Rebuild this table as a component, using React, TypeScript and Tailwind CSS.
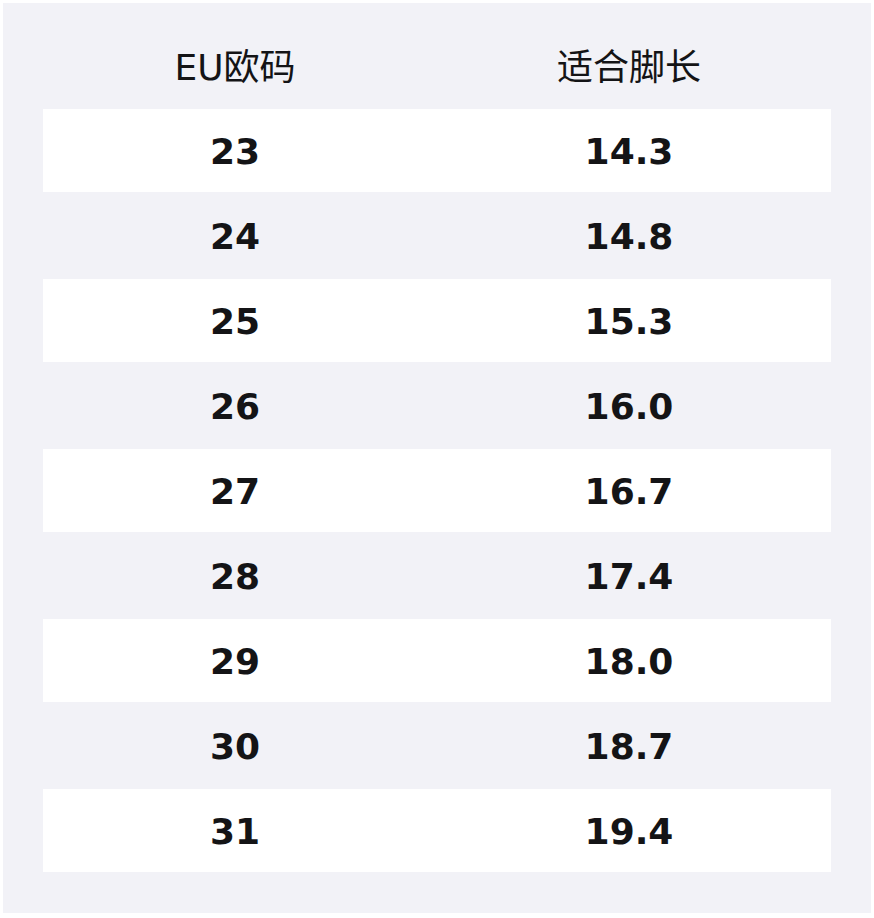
import React from "react";

const rows: [string, string][] = [
  ["23", "14.3"],
  ["24", "14.8"],
  ["25", "15.3"],
  ["26", "16.0"],
  ["27", "16.7"],
  ["28", "17.4"],
  ["29", "18.0"],
  ["30", "18.7"],
  ["31", "19.4"],
];

export default function App() {
  return (
    <div
      className="w-[874px] h-[918px] bg-white p-[3px]"
      style={{ fontFamily: '"DejaVu Sans", "Noto Sans CJK SC", sans-serif' }}
    >
      <div className="w-[868px] h-[910px] bg-[#f2f2f7] px-[40px] pt-[21px] text-[#141416]">
        <div className="grid grid-cols-[384px_1fr] h-[85px] items-center text-[36px]">
          <div className="text-center pt-[2px]">EU欧码</div>
          <div className="text-center pt-[2px]">适合脚长</div>
        </div>
        <div className="flex flex-col gap-[2px]">
          {rows.map(([eu, len], i) => (
            <div
              key={eu}
              className={
                i % 2 === 0
                  ? "grid grid-cols-[384px_1fr] h-[83px] items-center bg-white text-[36px] font-bold pt-[2px]"
                  : "grid grid-cols-[384px_1fr] h-[83px] items-center text-[36px] font-bold pt-[2px]"
              }
            >
              <div className="text-center">{eu}</div>
              <div className="text-center">{len}</div>
            </div>
          ))}
        </div>
      </div>
    </div>
  );
}
